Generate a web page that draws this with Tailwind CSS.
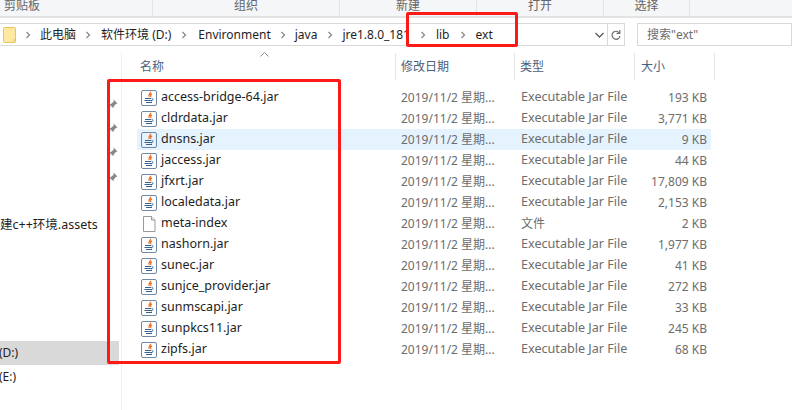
<!DOCTYPE html>
<html lang="zh-CN">
<head>
<meta charset="UTF-8" />
<title>ext</title>
<script src="https://cdn.jsdelivr.net/npm/@tailwindcss/browser@4"></script>
</head>
<body class="bg-white overflow-hidden">
<svg class="hidden">
	<defs>
		<linearGradient id="jarbg" x1="0" y1="0" x2="0" y2="1">
			<stop offset="0" stop-color="#ffffff" />
			<stop offset=".55" stop-color="#eef3f8" />
			<stop offset="1" stop-color="#b4c7da" />
		</linearGradient>
		<symbol id="jar" viewBox="0 0 16 16">
			<rect x="0.5" y="0.5" width="15" height="15" rx="1.5" fill="url(#jarbg)" stroke="#6f88a3" />
			<path d="M9.500 1.800c.8 1.700-3 2.700-1.300 5.200M11 3.800c-1.800 .9-1.800 1.900-1 3.200" fill="none" stroke="#e8701f" stroke-width="1.300" />
			<path d="M4 8.500h6M3.500 10.500h7.500M5 12.500h6" stroke="#34618d" stroke-width="1.100" />
			<path d="M10.500 8.300c2 0 2 2.200-.5 2.700" fill="none" stroke="#34618d" stroke-width=".9" />
		</symbol>
		<symbol id="pin" viewBox="0 0 10 10">
			<path d="M6 .5l3.500 3.500-1.500.5-2 2.500-.2 1.500-3.800-3.800 1.500-.2 2.500-2z" fill="#85888d" />
			<path d="M3 7l-2.500 2.500" stroke="#85888d" stroke-width="1" />
		</symbol>
		<symbol id="crumb" viewBox="0 0 6 8">
			<path d="M1.500 1l3 3-3 3" fill="none" stroke="#8a8a8a" stroke-width="1.300" />
		</symbol>
	</defs>
</svg>

<div class="relative h-[410px] w-[792px] overflow-hidden font-['Noto_Sans','Noto_Sans_CJK_SC',sans-serif] text-[12px] text-[#1e1e1e]">
	<!-- ribbon -->
	<div class="flex h-[18px] border-b-2 border-[#e2e3e5] bg-[#f5f6f7] text-[#666]">
		<div class="w-[153px] border-r border-[#e2e3e4] pl-1 leading-[11px]">剪贴板</div>
		<div class="w-[187px] border-r border-[#e2e3e4] text-center leading-[11px]">组织</div>
		<div class="w-[137px] border-r border-[#e2e3e4] text-center leading-[11px]">新建</div>
		<div class="w-[127px] border-r border-[#e2e3e4] text-center leading-[11px]">打开</div>
		<div class="w-[86px] border-r border-[#e2e3e4] text-center leading-[11px]">选择</div>
		<div class="flex-1"></div>
	</div>

	<!-- address bar -->
	<div class="flex h-[28px] items-start pt-[5px]">
		<div class="flex h-[23px] w-[625px] items-center border-y border-r border-[#d9d9d9]">
			<svg class="ml-[3px] h-[16px] w-[13px]" viewBox="0 0 13 16"><path d="M.5 1.500a1 1 0 0 1 1-1h10a1 1 0 0 1 1 1v13a1 1 0 0 1-1 1h-10a1 1 0 0 1-1-1z" fill="#fde9a0" stroke="#e6c65c" /><path d="M11 12v3.500" stroke="#e6c65c" /></svg>
			<svg class="ml-[9px] h-[8px] w-[6px]"><use href="#crumb" /></svg>
			<span class="ml-[9px]">此电脑</span>
			<svg class="ml-[9px] h-[8px] w-[6px]"><use href="#crumb" /></svg>
			<span class="ml-[10px]">软件环境 (D:)</span>
			<svg class="ml-[10px] h-[8px] w-[6px]"><use href="#crumb" /></svg>
			<span class="ml-[11px]">Environment</span>
			<svg class="ml-[9px] h-[8px] w-[6px]"><use href="#crumb" /></svg>
			<span class="ml-[9px]">java</span>
			<svg class="ml-[10px] h-[8px] w-[6px]"><use href="#crumb" /></svg>
			<span class="ml-[9px]">jre1.8.0_181</span>
			<svg class="ml-[10px] h-[8px] w-[6px]"><use href="#crumb" /></svg>
			<span class="ml-[10px]">lib</span>
			<svg class="ml-[10px] h-[8px] w-[6px]"><use href="#crumb" /></svg>
			<span class="ml-[10px]">ext</span>
			<svg class="ml-auto mr-[3px] h-[6px] w-[9px]" viewBox="0 0 9 6"><path d="M.5 1l4 4 4-4" fill="none" stroke="#5a5a5a" stroke-width="1.300" /></svg>
			<div class="flex h-full w-[17px] items-center justify-center border-l border-[#d9d9d9]">
				<svg class="h-[12px] w-[10px]" viewBox="0 0 10 12"><path d="M8.500 4.200A4 4 0 1 0 9 7M8.800 1v3.500H5.500" fill="none" stroke="#6f6f6f" stroke-width="1.200" /></svg>
			</div>
		</div>
		<div class="ml-[12px] flex h-[23px] flex-1 items-center border border-[#d9d9d9] pl-[9px] text-[#6d6d6d]">搜索"ext"</div>
	</div>

	<div class="mt-[7px] flex h-[357px]">
		<!-- nav pane -->
		<div class="relative w-[122px] shrink-0 border-r border-[#f0f0f0]">
			<svg class="absolute left-[107px] top-[46px] h-[11px] w-[11px]"><use href="#pin" /></svg>
			<svg class="absolute left-[107px] top-[70px] h-[11px] w-[11px]"><use href="#pin" /></svg>
			<svg class="absolute left-[107px] top-[94px] h-[11px] w-[11px]"><use href="#pin" /></svg>
			<svg class="absolute left-[107px] top-[119px] h-[11px] w-[11px]"><use href="#pin" /></svg>
			<div class="absolute left-0 top-[163px] whitespace-nowrap text-[12.5px] leading-[18px]">建c++环境.assets</div>
			<div class="absolute left-0 top-[288px] h-[24px] w-[119px] bg-[#d9d9d9] leading-[24px]"><span class="ml-[-1px] block">(D:)</span></div>
			<div class="absolute left-0 top-[312px] h-[24px] leading-[24px]"><span class="ml-[-1px] block">(E:)</span></div>
		</div>

		<!-- file list -->
		<div class="relative flex-1 pl-[15px]">
			<svg class="absolute left-[138px] top-[-1px] h-[5px] w-[9px]" viewBox="0 0 9 5"><path d="M.5 4.500l4-4 4 4" fill="none" stroke="#8c8c8c" /></svg>
			<div class="flex h-[27px] w-[578px] text-[#4c607a]">
				<div class="w-[259px] border-r border-[#e5e5e5] pl-[3px] leading-[27px]">名称</div>
				<div class="w-[119px] border-r border-[#e5e5e5] pl-[5px] leading-[27px]">修改日期</div>
				<div class="w-[120px] border-r border-[#e5e5e5] pl-[5px] leading-[27px]">类型</div>
				<div class="w-[80px] border-r border-[#e5e5e5] pl-[6px] leading-[27px]">大小</div>
			</div>
			<div class="pt-[7px] text-[#6d6d6d]">
				<div class="flex h-[21px] w-[574px] items-center"><div class="flex w-[259px] items-center pl-[4px] text-[12.5px] text-[#1e1e1e]"><svg class="mr-[4px] h-[16px] w-[16px]"><use href="#jar" /></svg>access-bridge-64.jar</div><div class="w-[120px] pl-[5px]">2019/11/2 星期...</div><div class="w-[120px] pl-[5px] text-[12.6px]">Executable Jar File</div><div class="w-[71px] text-right">193 KB</div></div>
				<div class="flex h-[21px] w-[574px] items-center"><div class="flex w-[259px] items-center pl-[4px] text-[12.5px] text-[#1e1e1e]"><svg class="mr-[4px] h-[16px] w-[16px]"><use href="#jar" /></svg>cldrdata.jar</div><div class="w-[120px] pl-[5px]">2019/11/2 星期...</div><div class="w-[120px] pl-[5px] text-[12.6px]">Executable Jar File</div><div class="w-[71px] text-right">3,771 KB</div></div>
				<div class="flex h-[21px] w-[574px] items-center bg-[#e5f3ff]"><div class="flex w-[259px] items-center pl-[4px] text-[12.5px] text-[#1e1e1e]"><svg class="mr-[4px] h-[16px] w-[16px]"><use href="#jar" /></svg>dnsns.jar</div><div class="w-[120px] pl-[5px]">2019/11/2 星期...</div><div class="w-[120px] pl-[5px] text-[12.6px]">Executable Jar File</div><div class="w-[71px] text-right">9 KB</div></div>
				<div class="flex h-[21px] w-[574px] items-center"><div class="flex w-[259px] items-center pl-[4px] text-[12.5px] text-[#1e1e1e]"><svg class="mr-[4px] h-[16px] w-[16px]"><use href="#jar" /></svg>jaccess.jar</div><div class="w-[120px] pl-[5px]">2019/11/2 星期...</div><div class="w-[120px] pl-[5px] text-[12.6px]">Executable Jar File</div><div class="w-[71px] text-right">44 KB</div></div>
				<div class="flex h-[21px] w-[574px] items-center"><div class="flex w-[259px] items-center pl-[4px] text-[12.5px] text-[#1e1e1e]"><svg class="mr-[4px] h-[16px] w-[16px]"><use href="#jar" /></svg>jfxrt.jar</div><div class="w-[120px] pl-[5px]">2019/11/2 星期...</div><div class="w-[120px] pl-[5px] text-[12.6px]">Executable Jar File</div><div class="w-[71px] text-right">17,809 KB</div></div>
				<div class="flex h-[21px] w-[574px] items-center"><div class="flex w-[259px] items-center pl-[4px] text-[12.5px] text-[#1e1e1e]"><svg class="mr-[4px] h-[16px] w-[16px]"><use href="#jar" /></svg>localedata.jar</div><div class="w-[120px] pl-[5px]">2019/11/2 星期...</div><div class="w-[120px] pl-[5px] text-[12.6px]">Executable Jar File</div><div class="w-[71px] text-right">2,153 KB</div></div>
				<div class="flex h-[21px] w-[574px] items-center"><div class="flex w-[259px] items-center pl-[4px] text-[12.5px] text-[#1e1e1e]"><svg class="mr-[4px] h-[16px] w-[16px]" viewBox="0 0 16 16"><path d="M2.500 .5h8l3.500 3.500v11.500h-11.500z" fill="#fff" stroke="#9a9a9a" /><path d="M10.500 .5v3.500h3.500" fill="#eee" stroke="#9a9a9a" /></svg>meta-index</div><div class="w-[120px] pl-[5px]">2019/11/2 星期...</div><div class="w-[120px] pl-[5px]">文件</div><div class="w-[71px] text-right">2 KB</div></div>
				<div class="flex h-[21px] w-[574px] items-center"><div class="flex w-[259px] items-center pl-[4px] text-[12.5px] text-[#1e1e1e]"><svg class="mr-[4px] h-[16px] w-[16px]"><use href="#jar" /></svg>nashorn.jar</div><div class="w-[120px] pl-[5px]">2019/11/2 星期...</div><div class="w-[120px] pl-[5px] text-[12.6px]">Executable Jar File</div><div class="w-[71px] text-right">1,977 KB</div></div>
				<div class="flex h-[21px] w-[574px] items-center"><div class="flex w-[259px] items-center pl-[4px] text-[12.5px] text-[#1e1e1e]"><svg class="mr-[4px] h-[16px] w-[16px]"><use href="#jar" /></svg>sunec.jar</div><div class="w-[120px] pl-[5px]">2019/11/2 星期...</div><div class="w-[120px] pl-[5px] text-[12.6px]">Executable Jar File</div><div class="w-[71px] text-right">41 KB</div></div>
				<div class="flex h-[21px] w-[574px] items-center"><div class="flex w-[259px] items-center pl-[4px] text-[12.5px] text-[#1e1e1e]"><svg class="mr-[4px] h-[16px] w-[16px]"><use href="#jar" /></svg>sunjce_provider.jar</div><div class="w-[120px] pl-[5px]">2019/11/2 星期...</div><div class="w-[120px] pl-[5px] text-[12.6px]">Executable Jar File</div><div class="w-[71px] text-right">272 KB</div></div>
				<div class="flex h-[21px] w-[574px] items-center"><div class="flex w-[259px] items-center pl-[4px] text-[12.5px] text-[#1e1e1e]"><svg class="mr-[4px] h-[16px] w-[16px]"><use href="#jar" /></svg>sunmscapi.jar</div><div class="w-[120px] pl-[5px]">2019/11/2 星期...</div><div class="w-[120px] pl-[5px] text-[12.6px]">Executable Jar File</div><div class="w-[71px] text-right">33 KB</div></div>
				<div class="flex h-[21px] w-[574px] items-center"><div class="flex w-[259px] items-center pl-[4px] text-[12.5px] text-[#1e1e1e]"><svg class="mr-[4px] h-[16px] w-[16px]"><use href="#jar" /></svg>sunpkcs11.jar</div><div class="w-[120px] pl-[5px]">2019/11/2 星期...</div><div class="w-[120px] pl-[5px] text-[12.6px]">Executable Jar File</div><div class="w-[71px] text-right">245 KB</div></div>
				<div class="flex h-[21px] w-[574px] items-center"><div class="flex w-[259px] items-center pl-[4px] text-[12.5px] text-[#1e1e1e]"><svg class="mr-[4px] h-[16px] w-[16px]"><use href="#jar" /></svg>zipfs.jar</div><div class="w-[120px] pl-[5px]">2019/11/2 星期...</div><div class="w-[120px] pl-[5px] text-[12.6px]">Executable Jar File</div><div class="w-[71px] text-right">68 KB</div></div>
			</div>
		</div>
	</div>

	<!-- red annotation boxes -->
	<div class="absolute left-[406px] top-[12px] h-[35px] w-[112px] rounded-[2px] border-[3px] border-[#fb1a17]"></div>
	<div class="absolute left-[107px] top-[79px] h-[285px] w-[234px] rounded-[2px] border-[3px] border-[#fb1a17]"></div>
</div>
</body>
</html>
